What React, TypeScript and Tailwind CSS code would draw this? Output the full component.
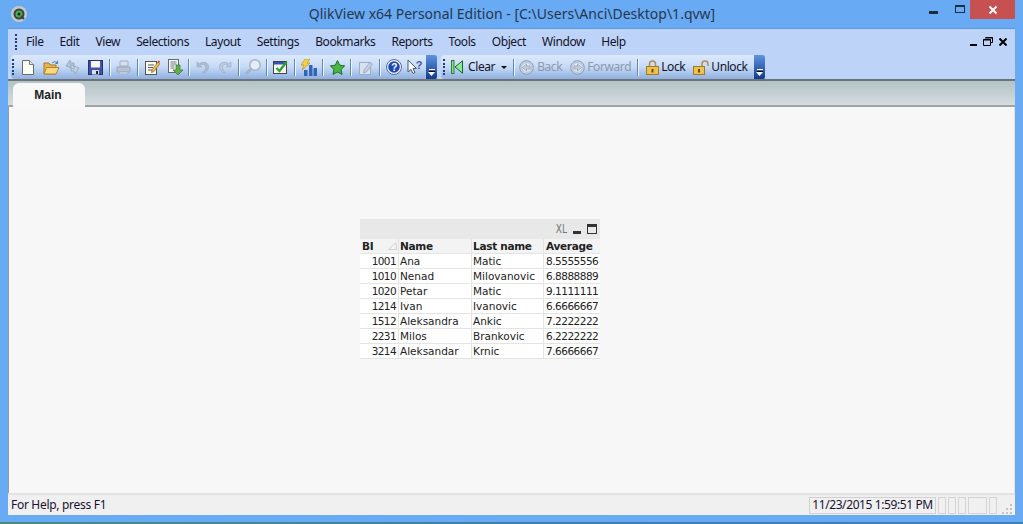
import React from "react";

const ui = { fontFamily: '"Noto Sans", "Open Sans", sans-serif' };

function Sep({ className = "" }: { className?: string }) {
  return <div className={`w-[1px] h-[17px] bg-[#5f86bd] border-r border-[#f0f6ff] box-content ${className}`} />;
}

function Grip() {
  return (
    <div className="w-[2px] h-[16px] flex flex-col justify-between">
      {[0, 1, 2, 3, 4].map((i) => (
        <div key={i} className="w-[2px] h-[2px] bg-[#1c3f78]" />
      ))}
    </div>
  );
}

function Chevron({ className = "" }: { className?: string }) {
  return (
    <div className={`w-[11px] h-[24px] bg-gradient-to-b from-[#5f93e0] to-[#0f3c8c] rounded-r-[2px] flex flex-col items-center justify-end pb-[3px] ${className}`}>
      <div className="w-[6px] h-[1px] bg-white mb-[1px]" />
      <div className="w-[6px] h-[1px] bg-black" />
      <svg width="7" height="4" viewBox="0 0 7 4"><path d="M0 0h7L3.500 4z" fill="#fff" /></svg>
    </div>
  );
}

const I = ({ w = 16, h = 16, className = "", children }: { w?: number; h?: number; className?: string; children: React.ReactNode }) => (
  <svg width={w} height={h} viewBox={`0 0 ${w} ${h}`} className={`shrink-0 ${className}`}>{children}</svg>
);

function IconNew({ className }: { className?: string }) {
  return <I w={12} h={15} className={className}><path d="M.5.5h7l4 4v10H.5z" fill="#fdfdf8" stroke="#6a6a6a" /><path d="M7.500.5v4h4" fill="#dfe6ee" stroke="#777" /></I>;
}
function IconOpen({ className }: { className?: string }) {
  return <I w={17} h={15} className={className}><path d="M1 3h5l1 2h6v9H1z" fill="#e5b654" stroke="#a9781f" /><path d="M3.500 7.500H16l-3 6.500H1z" fill="#fbd87f" stroke="#b38428" /><path d="M9 3q3-3 5 0" fill="none" stroke="#5a7fb5" /><path d="M15 0v4h-3z" fill="#5a7fb5" /></I>;
}
function IconSync({ className }: { className?: string }) {
  return <I w={15} h={16} className={className}><path d="M1 7l4-6 1 3h3v3L6 6v3z" fill="#b4c2d6" stroke="#8fa2bd" strokeWidth=".8" /><path d="M14 9l-4 6-1-3H6V9l3 1V7z" fill="#c3cfdf" stroke="#8fa2bd" strokeWidth=".8" /></I>;
}
function IconSave({ className }: { className?: string }) {
  return <I w={15} h={15} className={className}><rect x=".5" y=".5" width="14" height="14" fill="#3f54a8" stroke="#26336f" /><rect x="3" y="1" width="9" height="6.500" fill="#f4f6fb" /><rect x="4" y="10" width="7" height="4.500" fill="#dde" /><rect x="8" y="11" width="2" height="3" fill="#223" /></I>;
}
function IconPrint({ className }: { className?: string }) {
  return <I w={15} h={15} className={className}><path d="M4 1h8v5H4z" fill="#d6dfea" stroke="#9fb0c6" /><path d="M1 7h13v5H1z" fill="#b6c3d5" stroke="#96a8c0" /><path d="M3 12h9v2H3z" fill="#dfe6ef" stroke="#9fb0c6" /></I>;
}
function IconEdit({ className }: { className?: string }) {
  return <I w={15} h={15} className={className}><rect x=".5" y="1.500" width="11" height="13" fill="#fbfbf4" stroke="#555" /><path d="M3 5h6M3 7.500h5M3 10h4" stroke="#555" /><path d="M7 10l6-8 2 1.500-6 8-2.500 1z" fill="#eec04e" stroke="#8a6620" strokeWidth=".7" /><path d="M12.500 2l1-1.500 1.500 1-1 1.500z" fill="#d0443c" /></I>;
}
function IconImport({ className }: { className?: string }) {
  return <I w={15} h={16} className={className}><rect x=".5" y=".5" width="10" height="13" fill="#f6f8f2" stroke="#667" /><path d="M2.500 3h6M2.500 5h6M2.500 7h4M2.500 9h4" stroke="#6a7a88" /><path d="M8 6h4v5h3l-5 5-5-5h3z" fill="#63ad4e" stroke="#347a2a" strokeWidth=".7" /></I>;
}
function IconUndo({ className }: { className?: string }) {
  return <I w={13} h={13} className={className}><path d="M1 1v5h5L4.200 4.200C6 2.500 9.500 3.500 9.500 6.500c0 2-1 3.500-3 5.500 4-.5 6-3 6-6.500C12.500 1.500 7 0 3.500 2.800z" fill="#aebdd2" stroke="#93a6c0" strokeWidth=".6" /></I>;
}
function IconRedo({ className }: { className?: string }) {
  return <I w={13} h={13} className={className}><path d="M12 1v5H7l1.800-1.800C7 2.500 3.500 3.500 3.500 6.500c0 2 1 3.500 3 5.500-4-.5-6-3-6-6.500C.500 1.500 6 0 9.500 2.800z" fill="#bccade" stroke="#93a6c0" strokeWidth=".6" /></I>;
}
function IconSearch({ className }: { className?: string }) {
  return <I w={16} h={16} className={className}><path d="M6 10l-5 5" stroke="#a3b3c8" strokeWidth="3" /><circle cx="10" cy="6" r="5.200" fill="#e6edf6" stroke="#a3b3c8" strokeWidth="1.500" /></I>;
}
function IconCheck({ className }: { className?: string }) {
  return <I w={16} h={14} className={className}><rect x=".5" y="1.500" width="13" height="12" fill="#f8f8f8" stroke="#444" /><rect x="1" y="2" width="12" height="2.500" fill="#2f55b8" /><path d="M3.500 8l3 3 7-9" fill="none" stroke="#2fa32c" strokeWidth="2.400" /></I>;
}
function IconChart({ className }: { className?: string }) {
  return <I w={17} h={17} className={className}><rect x="4" y="11" width="3.500" height="6" fill="#2f66b8" /><rect x="9" y="6" width="3.500" height="11" fill="#2f66b8" /><rect x="13.500" y="9" width="3.500" height="8" fill="#2f66b8" /><path d="M5 0h5L7 4h3L2 11l2-5H1z" fill="#f6d13c" stroke="#b28a16" strokeWidth=".6" /></I>;
}
function IconStar({ className }: { className?: string }) {
  return <I w={15} h={15} className={className}><path d="M7.500.5l2.200 4.700 5 .7-3.600 3.500.9 5-4.500-2.400L3 14.400l.9-5L.3 5.900l5-.7z" fill="#49b742" stroke="#1e6e23" /></I>;
}
function IconEdit2({ className }: { className?: string }) {
  return <I w={15} h={15} className={className}><rect x=".5" y="2.500" width="11" height="12" fill="#d8e2ef" stroke="#9aabc3" /><path d="M5 10l6-8 2.500 2-6 8-3 1z" fill="#c3cfdf" stroke="#8ea1bb" strokeWidth=".7" /></I>;
}
function IconHelp({ className }: { className?: string }) {
  return <I w={16} h={16} className={className}><circle cx="8" cy="8" r="7.500" fill="#f2f6fc" stroke="#4d6aa3" /><circle cx="8" cy="8" r="5.800" fill="#2147b7" /><text x="8" y="11.500" textAnchor="middle" fontSize="10" fontWeight="700" fill="#fff" fontFamily="Liberation Sans">?</text></I>;
}
function IconWhats({ className }: { className?: string }) {
  return <I w={17} h={16} className={className}><path d="M1 1v12l3-2.500 2 4 2-1-2-4h3.500z" fill="#f5f7fb" stroke="#4a5a70" /><text x="12" y="10" textAnchor="middle" fontSize="11" fontWeight="700" fill="#3a5c9e" fontFamily="Liberation Sans">?</text></I>;
}
function IconClear({ className }: { className?: string }) {
  return <I w={12} h={14} className={className}><rect x=".5" y=".5" width="2.500" height="13" fill="#7fe08a" stroke="#1f5f2c" strokeWidth=".8" /><path d="M11.500.8v12.400L4 7z" fill="#86ee92" stroke="#1f5f2c" /></I>;
}
function IconNav({ dir, className }: { dir: "l" | "r"; className?: string }) {
  return (
    <I w={15} h={15} className={className}>
      <circle cx="7.500" cy="7.500" r="6.800" fill="#c8d3e3" stroke="#8a9cb6" />
      <circle cx="7.500" cy="7.500" r="4.800" fill="#e4eaf3" stroke="#a3b2c8" strokeWidth=".6" />
      <path d={dir === "l" ? "M3.500 7.500L7.500 4v2H11v3H7.500v2z" : "M11.500 7.500L7.500 4v2H4v3h3.500v2z"} fill="#c3cfdf" stroke="#8a9cb6" strokeWidth=".7" />
    </I>
  );
}
function IconLock({ className, open }: { className?: string; open?: boolean }) {
  return open ? (
    <I w={16} h={15} className={className}>
      <path d="M9 7V4a3 3 0 0 1 6 0v2" fill="none" stroke="#b08d58" strokeWidth="1.500" />
      <rect x=".5" y="6.500" width="11" height="8" fill="#eec04e" stroke="#a47a1e" />
      <rect x="5" y="9" width="2" height="3.500" fill="#6b4c12" />
    </I>
  ) : (
    <I w={13} h={15} className={className}>
      <path d="M3.500 7V4a3 3 0 0 1 6 0v3" fill="none" stroke="#b08d58" strokeWidth="1.500" />
      <rect x=".5" y="6.500" width="12" height="8" fill="#eec04e" stroke="#a47a1e" />
      <rect x="5.500" y="9" width="2" height="3.500" fill="#6b4c12" />
    </I>
  );
}

const menus = ["File", "Edit", "View", "Selections", "Layout", "Settings", "Bookmarks", "Reports", "Tools", "Object", "Window", "Help"];

const rows = [
  ["1001", "Ana", "Matic", "8.5555556"],
  ["1010", "Nenad", "Milovanovic", "6.8888889"],
  ["1020", "Petar", "Matic", "9.1111111"],
  ["1214", "Ivan", "Ivanovic", "6.6666667"],
  ["1512", "Aleksandra", "Ankic", "7.2222222"],
  ["2231", "Milos", "Brankovic", "6.2222222"],
  ["3214", "Aleksandar", "Krnic", "7.6666667"],
];

const tableFont = { fontFamily: '"DejaVu Sans", sans-serif' };

export default function App() {
  return (
    <div className="w-[1023px] h-[524px] bg-[#69aaf5] flex flex-col overflow-hidden text-[#1b1b2b]" style={ui}>
      <div className="h-[28px] flex items-center shrink-0 relative">
        <svg width="18" height="18" viewBox="0 0 18 18" className="ml-[10px] mb-[1px]">
          <circle cx="9" cy="9" r="8" fill="#c3cbc3" />
          <circle cx="9" cy="9" r="5.500" fill="#39424a" />
          <circle cx="9" cy="9" r="3.500" fill="#4cae4c" />
          <circle cx="9" cy="9" r="1.500" fill="#1c2a22" />
          <path d="M11 11l3 3" stroke="#39424a" strokeWidth="2" />
        </svg>
        <div className="flex-1 text-center text-[14px] text-[#28364a] ml-[26px] pb-[2px]">
          QlikView x64 Personal Edition - [C:\Users\Anci\Desktop\1.qvw]
        </div>
        <div className="w-[45px] h-[19px] mr-[8px] self-start bg-[#c75050] flex items-center justify-center">
          <svg width="10" height="10" viewBox="0 0 10 10"><path d="M1.500 1.500l7 7M8.500 1.500l-7 7" stroke="#fff" strokeWidth="2" /></svg>
        </div>
        <div className="absolute left-[929px] top-[11px] w-[9px] h-[3px] bg-[#1f2b3d]" />
        <div className="absolute left-[955px] top-[5px] w-[10px] h-[8px] border border-[#1f2b3d] border-t-2" />
      </div>

      <div className="mx-[8px] h-[487px] shrink-0 flex flex-col border-t border-[#5f98dd] bg-[#f0f0f0]">
        <div className="h-[26px] shrink-0 bg-[#bdd3f7] flex items-center relative">
          <div className="ml-[7px]"><Grip /></div>
          <div className="ml-[9px] flex gap-[16px] text-[12px] text-[#14142a] tracking-[-0.4px] pb-[1px]">
            {menus.map((m) => <span key={m}>{m}</span>)}
          </div>
          <div className="absolute right-[8px] top-[8px] flex items-center gap-[6px]">
            <div className="w-[7px] h-[2px] bg-black mt-[6px]" />
            <svg width="10" height="9" viewBox="0 0 10 9"><path d="M2.500.5h7v5h-2M.5 2.500h7v6h-7z" fill="none" stroke="#000" /><path d="M2 1h8M0 3h8" stroke="#000" /></svg>
            <svg width="8" height="8" viewBox="0 0 8 8"><path d="M.5.500l7 7M7.500.500l-7 7" stroke="#000" strokeWidth="2" /></svg>
          </div>
        </div>

        <div className="h-[24px] shrink-0 bg-[#bdd3f7] flex items-stretch pl-[3px] relative text-[12px] tracking-[-0.4px]">
          <div className="w-[426px] h-[24px] bg-gradient-to-b from-[#dce9fc] via-[#c6daf6] to-[#8fb0e0] rounded-l-[4px] flex items-center">
            <div className="ml-[1px]"><Grip /></div>
            <IconNew className="ml-[8px]" />
            <IconOpen className="ml-[9px]" />
            <IconSync className="ml-[5px]" />
            <IconSave className="ml-[8px]" />
            <Sep className="ml-[6px]" />
            <IconPrint className="ml-[5px]" />
            <Sep className="ml-[6px]" />
            <IconEdit className="ml-[6px]" />
            <IconImport className="ml-[8px]" />
            <Sep className="ml-[5px]" />
            <IconUndo className="ml-[6px]" />
            <IconRedo className="ml-[10px]" />
            <Sep className="ml-[6px]" />
            <IconSearch className="ml-[5px]" />
            <Sep className="ml-[5px]" />
            <IconCheck className="ml-[5px]" />
            <Sep className="ml-[5px]" />
            <IconChart className="ml-[4px]" />
            <Sep className="ml-[5px]" />
            <IconStar className="ml-[6px]" />
            <Sep className="ml-[5px]" />
            <IconEdit2 className="ml-[7px]" />
            <Sep className="ml-[5px]" />
            <IconHelp className="ml-[5px]" />
            <IconWhats className="ml-[5px]" />
            <Chevron className="ml-auto" />
          </div>
          <div className="ml-[4px] w-[324px] h-[24px] bg-gradient-to-b from-[#dce9fc] via-[#c6daf6] to-[#8fb0e0] rounded-l-[4px] flex items-center text-[#14142a]">
            <div className="ml-[2px]"><Grip /></div>
            <IconClear className="ml-[6px]" />
            <span className="ml-[5px]">Clear</span>
            <svg width="6" height="3" viewBox="0 0 6 3" className="ml-[6px]"><path d="M0 0h6L3 3z" fill="#111" /></svg>
            <Sep className="ml-[6px]" />
            <IconNav dir="l" className="ml-[4px]" />
            <span className="ml-[3px] text-[#8a99ae]">Back</span>
            <IconNav dir="r" className="ml-[8px]" />
            <span className="ml-[2px] text-[#8a99ae]">Forward</span>
            <Sep className="ml-[6px]" />
            <IconLock className="ml-[7px]" />
            <span className="ml-[2px]">Lock</span>
            <IconLock open className="ml-[8px]" />
            <span className="ml-[2px]">Unlock</span>
            <Chevron className="ml-auto" />
          </div>
        </div>

        <div className="h-[28px] shrink-0 bg-gradient-to-b from-[#b3c3c6] to-[#d6dcdf] border-t-2 border-[#6f7378] border-b-2 border-b-[#9ea3a6] flex items-end pl-[5px]">
          <div className="w-[72px] h-[24px] bg-[#f8f8f8] rounded-t-[6px] text-[12px] font-bold text-[#222] text-center pr-[2px] leading-[24px] mb-[-2px]" style={{ fontFamily: '"Liberation Sans", sans-serif' }}>
            Main
          </div>
        </div>

        <div className="flex-1 bg-[#f7f7f7] border-l border-[#9a9a9a] border-r border-r-[#e4e4e4] flex items-start pt-[112px] pl-[351px]">
          <div className="w-[240px] text-[10.5px] text-[#222]" style={tableFont}>
            <div className="h-[20px] bg-[#e8e8e8] flex items-center justify-end pr-[3px] gap-[5px]">
              <span className="text-[#777] text-[12px] inline-block scale-x-75 mr-[-1px]">XL</span>
              <div className="w-[8px] h-[3px] bg-[#333] mt-[6px]" />
              <div className="w-[10px] h-[10px] border border-[#333] border-t-[3px] ml-[1px]" />
            </div>
            <div className="flex h-[15px] bg-[#f3f3f3] font-bold leading-[14px] border-b border-[#e4e4e4] tracking-[-0.3px]">
              <div className="w-[39px] pl-[2px] border-r border-[#e4e4e4] flex justify-between items-center pr-[1px]">
                <span>BI</span>
                <svg width="9" height="8" viewBox="0 0 9 8"><path d="M8.500 7.500H.5L8 .5z" fill="#f5f5f5" stroke="#d0d0d0" /></svg>
              </div>
              <div className="w-[73px] pl-[1px] border-r border-[#e4e4e4]">Name</div>
              <div className="w-[72px] pl-[1px] border-r border-[#e4e4e4]">Last name</div>
              <div className="flex-1 pl-[2px]">Average</div>
            </div>
            {rows.map((r) => (
              <div key={r[0]} className="flex h-[15px] bg-white leading-[15px] border-b border-[#e4e4e4]">
                <div className="w-[39px] pr-[2px] text-right border-r border-[#e4e4e4] tracking-[-0.6px]">{r[0]}</div>
                <div className="w-[73px] pl-[1px] border-r border-[#e4e4e4]">{r[1]}</div>
                <div className="w-[72px] pl-[1px] border-r border-[#e4e4e4]">{r[2]}</div>
                <div className="flex-1 pl-[2px] tracking-[-0.5px]">{r[3]}</div>
              </div>
            ))}
          </div>
        </div>

        <div className="h-[22px] shrink-0 bg-[#f0f0f0] border-t-2 border-[#e2e2e2] flex items-center text-[12px] text-[#1a1030] pl-[3px] pr-[1px]">
          <span className="tracking-[-0.3px]">For Help, press F1</span>
          <div className="ml-auto h-[17px] w-[127px] border border-[#d0d0d0] text-center leading-[14px] tracking-[-0.4px] whitespace-nowrap">11/23/2015 1:59:51 PM</div>
          <div className="h-[17px] w-[8px] border border-[#d4d4d4] ml-[2px]" />
          <div className="h-[17px] w-[8px] border border-[#d4d4d4] ml-[2px]" />
          <div className="h-[17px] w-[8px] border border-[#d4d4d4] ml-[2px]" />
          <div className="h-[17px] w-[19px] border border-[#d4d4d4] ml-[2px]" />
          <div className="h-[17px] w-[8px] border border-[#d4d4d4] ml-[2px]" />
          <svg width="17" height="17" viewBox="0 0 17 17" className="shrink-0">
            <path d="M13 15h2v2h-2zM9 15h2v2H9zM5 15h2v2H5zM13 11h2v2h-2zM9 11h2v2H9zM13 7h2v2h-2z" fill="#c4c4c4" />
          </svg>
        </div>
      </div>
      <div className="flex-1 bg-[#69aaf5]" />
      <div className="h-[2px] shrink-0 bg-gradient-to-r from-[#4a8a7a] via-[#3a7fb0] to-[#3f7fb8]" />
    </div>
  );
}
